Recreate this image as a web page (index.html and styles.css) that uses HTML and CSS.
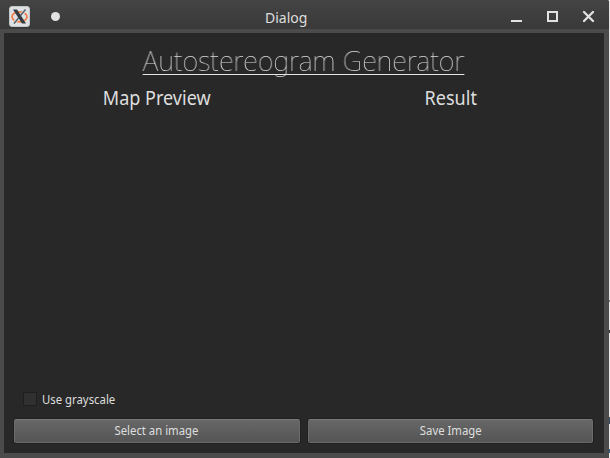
FILE: index.html
```html
<!DOCTYPE html>
<html lang="en">
<head>
<meta charset="utf-8">
<title>Dialog</title>
<link rel="stylesheet" href="styles.css">
</head>
<body>
<div class="window">
  <header class="titlebar">
    <svg class="logo" width="22" height="22" viewBox="0 0 22 22">
      <rect x=".5" y=".5" width="20" height="20" rx="2.5" fill="#dde1e3" stroke="#c3c7c8"/>
      <ellipse cx="10.5" cy="10.8" rx="7.5" ry="5" fill="none" stroke="#f47b43" stroke-width="1.7"/>
      <path d="M16 4.5 5 17" stroke="#dde1e3" stroke-width="3"/>
      <path d="M16.5 3.5 11.5 9.5M9.5 12 5 17.5" stroke="#555d62" stroke-width="1.4"/>
      <path d="M4 3.5h4L17 17.5h-4z" fill="#343b40"/>
    </svg>
    <span class="dot"></span>
    <span class="title">Dialog</span>
    <svg class="controls" width="86" height="16" viewBox="0 0 86 16" fill="none" stroke="#e2e2e2">
      <path d="M1 13h11" stroke-width="2"/>
      <rect x="38" y="4" width="9" height="9" stroke-width="2"/>
      <path d="m74 4 9 9m0-9-9 9" stroke-width="2.3" stroke-linecap="round"/>
    </svg>
  </header>
  <main class="content">
    <h1 class="heading"><span>Autostereogram Generator</span></h1>
    <div class="panes">
      <h2>Map Preview</h2>
      <h2>Result</h2>
    </div>
    <label class="option"><span class="box"></span><span class="caption">Use grayscale</span></label>
    <div class="actions">
      <button><span>Select an image</span></button>
      <button><span>Save Image</span></button>
    </div>
  </main>
</div>
<aside class="edge"></aside>
</body>
</html>
```
FILE: styles.css
```css
* { box-sizing: border-box; }
body {
  margin: 0;
  width: 610px;
  height: 458px;
  display: flex;
  overflow: hidden;
  background: #e6e6e6;
  font-family: "Noto Sans", "Open Sans", sans-serif;
  color: #dedede;
}
.window {
  width: 609px;
  height: 458px;
  display: flex;
  flex-direction: column;
  padding: 0 5px 5px 4px;
  background: #4b4b4b;
  border-radius: 0 2px 0 0;
}
.titlebar {
  height: 29px;
  flex: none;
  margin: 0 -5px 4px -4px;
  padding-left: 9px;
  display: flex;
  align-items: center;
  background: linear-gradient(#444, #393939);
  border-radius: 0 2px 0 0;
}
.logo { margin-top: 4px; }
.dot {
  width: 9px;
  height: 9px;
  margin: 4px 0 0 20px;
  border-radius: 50%;
  background: #e2e2e2;
}
.title {
  margin: 7px auto 0 205px;
  font-size: 14px;
  line-height: 20px;
}
.controls { margin: 2px 13px 0 0; }
.content {
  flex: 1;
  display: flex;
  flex-direction: column;
  padding: 9px 11px 10px 10px;
  background: #282828;
}
h1, h2 { margin: 0; font-weight: 400; }
.heading {
  height: 38px;
  line-height: 36px;
  text-align: center;
  font-size: 28px;
  font-weight: 100;
  white-space: nowrap;
}
.heading span {
  display: inline-block;
  height: 33px;
  border-bottom: 1px solid #e4e4e4;
  transform: scaleX(.966);
  will-change: transform;
}
.panes {
  flex: 1;
  display: grid;
  grid-template-columns: 1fr 1fr;
  column-gap: 8px;
  text-align: center;
}
.panes h2 {
  height: 36px;
  font-size: 19.5px;
  line-height: 35px;
  transform: scaleX(.925);
}
.option {
  display: flex;
  align-items: center;
  gap: 5px;
  height: 20px;
  margin: 0 0 10px 9px;
  font-size: 12px;
}
.caption {
  transform: scaleX(.945);
  transform-origin: left;
}
.box {
  width: 14px;
  height: 14px;
  border: 1px solid #1f1f1f;
  background: #303030;
}
.actions {
  display: grid;
  grid-template-columns: 1fr 1fr;
  column-gap: 8px;
}
button {
  height: 24px;
  padding: 0;
  border: 1px solid #747474;
  border-color: #7a7a7a #6c6c6c #686868;
  border-radius: 2px;
  background: linear-gradient(#676767, #555);
  box-shadow: 0 0 0 1px #202020;
  color: #dedede;
  font: 12px/20px "Noto Sans", sans-serif;
}
button span {
  display: inline-block;
  transform: scaleX(.945);
}
.edge { width: 1px; background: linear-gradient(#e6e6e6 300px, #777 300px 302px, #e6e6e6 302px 330px, #333 330px 333px, #e6e6e6 333px 417px, #36506a 417px 424px, #e6e6e6 424px 449px, #315d84 449px 453px, #e6e6e6 453px); }
```
